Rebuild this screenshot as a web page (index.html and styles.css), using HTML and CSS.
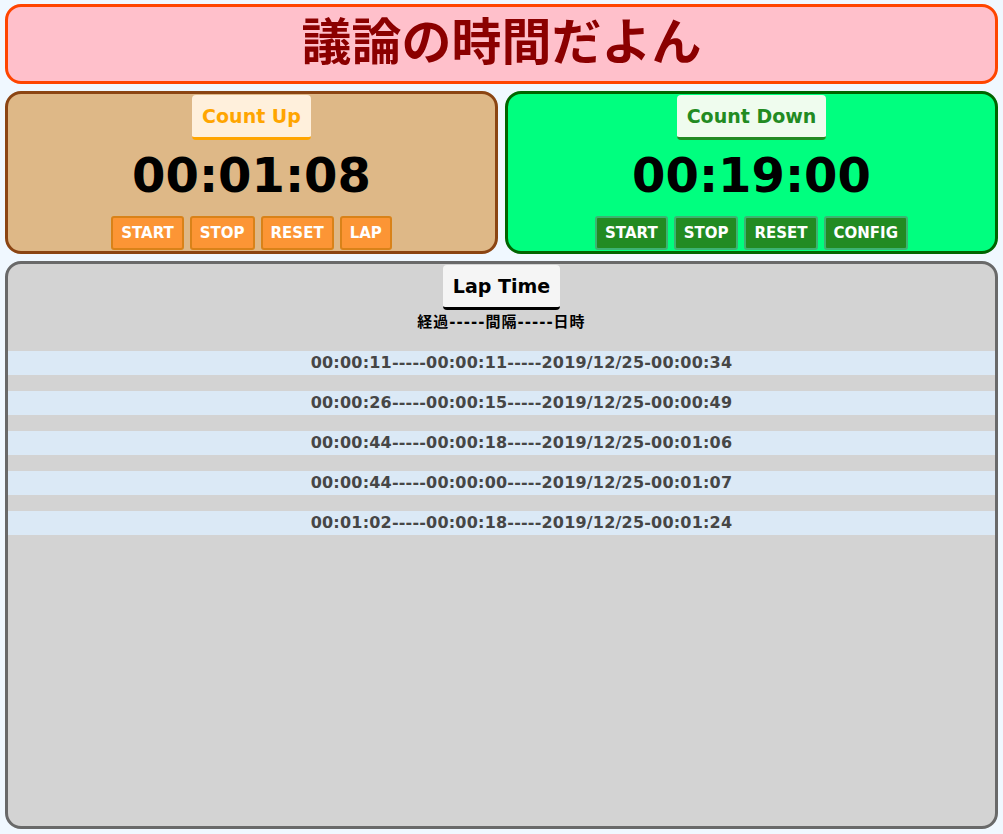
FILE: index.html
```html
<!DOCTYPE html>
<html lang="ja">
<head>
<meta charset="utf-8">
<title>議論の時間だよん</title>
<link rel="stylesheet" href="styles.css">
</head>
<body>
<div class="app">
  <header class="banner">
    <h1 class="title">議論の時間だよん</h1>
  </header>
  <div class="timers">
    <section class="panel panel-up">
      <div class="label label-up">Count Up</div>
      <div class="clock">00:01:08</div>
      <div class="buttons">
        <button class="btn btn-up">START</button>
        <button class="btn btn-up">STOP</button>
        <button class="btn btn-up">RESET</button>
        <button class="btn btn-up">LAP</button>
      </div>
    </section>
    <section class="panel panel-down">
      <div class="label label-down">Count Down</div>
      <div class="clock">00:19:00</div>
      <div class="buttons">
        <button class="btn btn-down">START</button>
        <button class="btn btn-down">STOP</button>
        <button class="btn btn-down">RESET</button>
        <button class="btn btn-down">CONFIG</button>
      </div>
    </section>
  </div>
  <section class="laps">
    <div class="label label-lap">Lap Time</div>
    <div class="lap-head">経過-----間隔-----日時</div>
    <ul class="lap-list">
      <li class="lap-row">00:00:11-----00:00:11-----2019/12/25-00:00:34</li>
      <li class="lap-row">00:00:26-----00:00:15-----2019/12/25-00:00:49</li>
      <li class="lap-row">00:00:44-----00:00:18-----2019/12/25-00:01:06</li>
      <li class="lap-row">00:00:44-----00:00:00-----2019/12/25-00:01:07</li>
      <li class="lap-row">00:01:02-----00:00:18-----2019/12/25-00:01:24</li>
    </ul>
  </section>
</div>
</body>
</html>
```

FILE: styles.css
```css
html, body {
  margin: 0;
  padding: 0;
  height: 100%;
}

body {
  background: #f0f8ff;
  font-family: "DejaVu Sans", "Noto Sans CJK JP", sans-serif;
}

.app {
  box-sizing: border-box;
  height: 100vh;
  padding: 4px 5px 5px;
  display: flex;
  flex-direction: column;
  gap: 7px;
}

.banner {
  box-sizing: border-box;
  height: 80px;
  background: #ffc0cb;
  border: 3px solid #ff4500;
  border-radius: 16px;
}

.title {
  margin: 0;
  padding-bottom: 12px;
  text-align: center;
  font-family: "Noto Sans CJK JP", sans-serif;
  font-size: 50px;
  font-weight: 700;
  line-height: 62px;
  color: #8b0000;
}

.timers {
  display: flex;
  gap: 7px;
}

.panel {
  flex: 1;
  box-sizing: border-box;
  height: 163px;
  border: 3px solid;
  border-radius: 16px;
  padding-top: 1px;
  display: flex;
  flex-direction: column;
  align-items: center;
}

.panel-up {
  background: #deb887;
  border-color: #8b4513;
}

.panel-down {
  background: #00ff7f;
  border-color: #006400;
}

.label {
  box-sizing: border-box;
  height: 45px;
  padding: 0 10px;
  border-radius: 4px;
  border-bottom: 3px solid;
  font-size: 19px;
  font-weight: 700;
  line-height: 42px;
}

.label-up {
  background: #fff0dc;
  color: #ffa500;
  border-bottom-color: #ffa500;
}

.label-down {
  background: #effcee;
  color: #228b22;
  border-bottom-color: #228b22;
}

.label-lap {
  background: #f5f5f5;
  color: #000;
  border-bottom-color: #000;
}

.clock {
  margin-top: 11px;
  font-size: 48px;
  font-weight: 700;
  line-height: 48px;
  color: #000;
}

.buttons {
  margin-top: 17px;
  display: flex;
  gap: 6px;
}

.btn {
  box-sizing: border-box;
  height: 34px;
  padding: 0 8px;
  border: 2px solid;
  border-radius: 3px;
  font-family: "DejaVu Sans", sans-serif;
  font-size: 15px;
  font-weight: 700;
  line-height: 30px;
  color: #fff;
}

.btn-up {
  background: #fc9535;
  border-color: #d98219;
}

.btn-down {
  background: #228b22;
  border-color: #3cb371;
}

.laps {
  flex: 1;
  box-sizing: border-box;
  background: #d3d3d3;
  border: 3px solid #696969;
  border-radius: 16px;
  padding-top: 1px;
  display: flex;
  flex-direction: column;
  align-items: center;
}

.lap-head {
  margin-top: 4px;
  font-size: 15px;
  font-weight: 700;
  letter-spacing: 1px;
  line-height: 16px;
  color: #000;
}

.lap-list {
  list-style: none;
  margin: 21px 0 0;
  padding: 0;
  align-self: stretch;
  display: flex;
  flex-direction: column;
  gap: 16px;
}

.lap-row {
  height: 24px;
  padding-left: 40px;
  background: #dbe9f6;
  text-align: center;
  font-size: 16px;
  font-weight: 700;
  letter-spacing: 0.2px;
  line-height: 24px;
  color: #464646;
}
```
